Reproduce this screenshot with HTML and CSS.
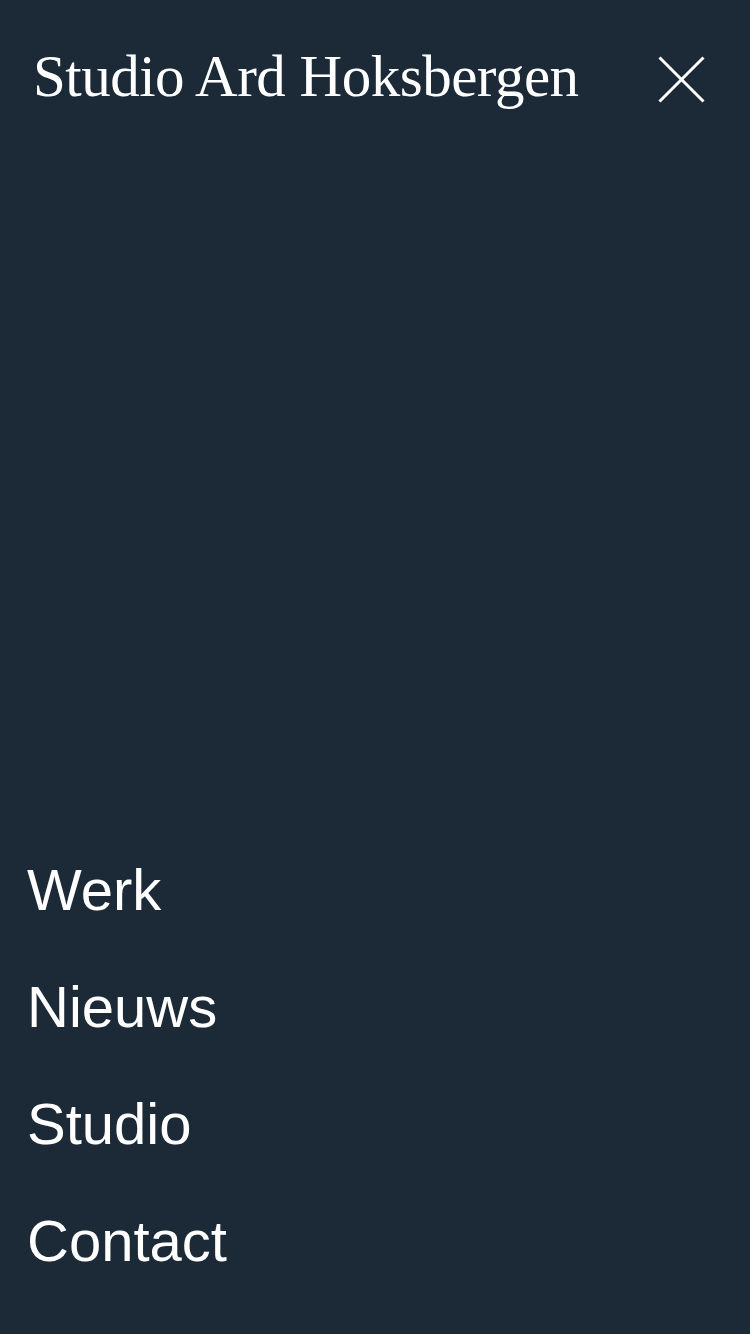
FILE: index.html
```html
<!DOCTYPE html>
<html lang="nl">
<head>
    <meta charset="UTF-8">
    <title>Studio Ard Hoksbergen</title>
    <meta name="viewport" content="width=device-width, initial-scale=1.0">
    <link rel="stylesheet" href="styles.css">
</head>
<body>
    <div class="menu-overlay">
        <header class="menu-header">
            <a class="logo" href="/">Studio Ard Hoksbergen</a>
            <button class="close-btn" aria-label="Sluit menu">
                <svg width="47" height="47" viewBox="0 0 47 47">
                    <line x1="1.5" y1="1.5" x2="45.5" y2="45.5" />
                    <line x1="45.5" y1="1.5" x2="1.5" y2="45.5" />
                </svg>
            </button>
        </header>

        <nav class="main-nav">
            <a href="/werk">Werk</a>
            <a href="/nieuws">Nieuws</a>
            <a href="/studio">Studio</a>
            <a href="/contact">Contact</a>
        </nav>
    </div>
</body>
</html>
```

FILE: styles.css
```css
/* Global Reset */
* {
    margin: 0;
    padding: 0;
    box-sizing: border-box;
}
body {
    background: #1c2a37;
    color: #fff;
    font-family: 'Liberation Sans', Arial, sans-serif;
    height: 100vh;
    overflow: hidden;
}
a {
    color: #fff;
    text-decoration: none;
}
.menu-overlay {
    height: 100%;
    display: flex;
    flex-direction: column;
}
.menu-header {
    display: flex;
    justify-content: space-between;
    align-items: flex-start;
    padding: 46px 45px 0 33px;
}
.logo {
    font-family: 'Liberation Serif', 'Times New Roman', serif;
    font-size: 59px;
    line-height: 60px;
    letter-spacing: -0.5px;
}
.close-btn {
    background: none;
    border: none;
    margin-top: 10px;
    cursor: pointer;
    display: flex;
}
.close-btn line {
    stroke: #fff;
    stroke-width: 3;
}
.main-nav {
    margin-top: auto;
    padding: 0 0 35px 27px;
    display: flex;
    flex-direction: column;
    align-items: flex-start;
}
.main-nav a {
    font-size: 58px;
    line-height: 117px;
}
```
